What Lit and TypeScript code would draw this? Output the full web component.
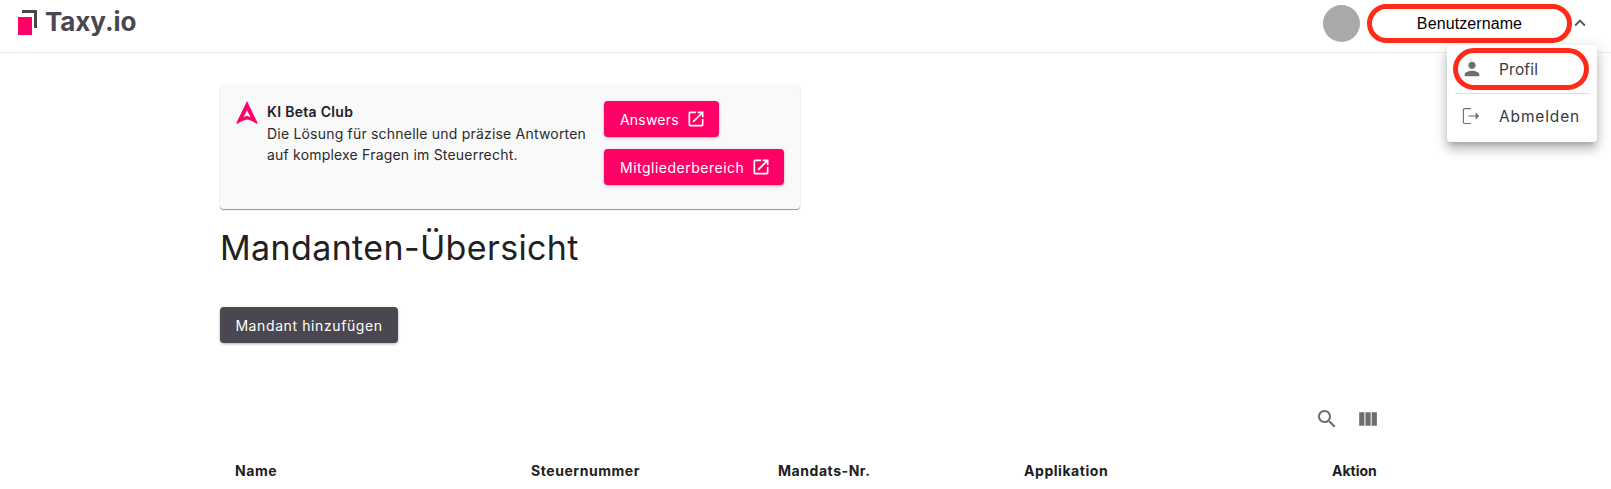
import { LitElement, html, css, svg } from "lit";
import { customElement } from "lit/decorators.js";

const icon = (d: string, size: number, cls = "") =>
  html`<svg class=${cls} width=${size} height=${size} viewBox="0 0 24 24" fill="currentColor">${svg`<path d=${d}></path>`}</svg>`;

const OPEN = "M19 19H5V5h7V3H5c-1.11 0-2 .9-2 2v14c0 1.1.89 2 2 2h14c1.1 0 2-.9 2-2v-7h-2v7zM14 3v2h3.59l-9.83 9.83 1.41 1.41L19 6.41V10h2V3h-7z";
const SEARCH = "M15.5 14h-.79l-.28-.27C15.41 12.59 16 11.11 16 9.5 16 5.91 13.09 3 9.5 3S3 5.91 3 9.5 5.91 16 9.5 16c1.61 0 3.09-.59 4.23-1.57l.27.28v.79l5 4.99L20.49 19l-4.99-5zm-6 0C7.01 14 5 11.99 5 9.5S7.01 5 9.5 5 14 7.01 14 9.5 11.99 14 9.5 14z";
const COLS = "M10 18h5V5h-5v13zm-6 0h5V5H4v13zM16 5v13h5V5h-5z";
const PERSON = "M12 12c2.21 0 4-1.79 4-4s-1.79-4-4-4-4 1.79-4 4 1.79 4 4 4zm0 2c-2.67 0-8 1.34-8 4v2h16v-2c0-2.66-5.33-4-8-4z";
const LESS = "M12 8l-6 6 1.41 1.41L12 10.83l4.59 4.58L18 14z";
const LOGOUT = "M5 4.5h7v-1.2H5C3.9 3.3 3.1 4.1 3.1 5.2v13.6c0 1.1.8 1.9 1.9 1.9h7v-1.2H5c-.4 0-.7-.3-.7-.7V5.2c0-.4.3-.7.7-.7zM21 12l-4-4v3.4H9v1.2h8V16l4-4z";

@customElement("app-root")
export class AppRoot extends LitElement {
  static styles = css`
    :host {
      display: block;
      height: 489px;
      overflow: hidden;
      position: relative;
      background: #fff;
      color: #212121;
      font-family: "Inter", "Liberation Sans", sans-serif;
    }
    .header {
      height: 52px;
      border-bottom: 1px solid #eeeeee;
      display: flex;
      align-items: center;
      padding-left: 18px;
      padding-right: 20px;
      box-sizing: content-box;
    }
    .logo { display: flex; align-items: center; gap: 7px; height: 52px; }
    .logo svg { display: block; margin-top: -6px; }
    .logo-text {
      font-size: 26px;
      font-weight: 700;
      color: #4a4750;
      line-height: 1;
      margin-top: -8px;
      letter-spacing: -0.1px;
    }
    .spacer { flex: 1; }
    .avatar { width: 37px; height: 37px; border-radius: 50%; background: #a9a9a9; margin-top: -5px; }
    .user {
      width: 205px;
      height: 39px;
      box-sizing: border-box;
      border: 5px solid #ff2a17;
      border-radius: 20px;
      margin-left: 7px;
      margin-top: -5px;
      display: flex;
      align-items: center;
      justify-content: center;
      font-family: "Liberation Sans", sans-serif;
      font-size: 16px;
      letter-spacing: 0.1px;
      color: #000;
    }
    .chev { color: #555; margin-left: -3px; margin-top: -6px; display: block; }
    .menu {
      position: absolute;
      left: 1447px;
      top: 45px;
      width: 150px;
      height: 97px;
      background: #fff;
      border-radius: 4px;
      box-shadow: 0 5px 5px -3px rgba(0,0,0,.2), 0 8px 10px 1px rgba(0,0,0,.14), 0 3px 14px 2px rgba(0,0,0,.12);
      box-sizing: border-box;
      padding: 3px 8px 0 6px;
    }
    .mi {
      display: flex;
      align-items: center;
      font-size: 15.5px;
      color: #3a3a3a;
      box-sizing: border-box;
    }
    .mi svg { color: #6f6f6f; display: block; flex: none; }
    .mi.profil {
      height: 42px;
      width: 136px;
      border: 5px solid #ff2a17;
      border-radius: 21px;
      padding-left: 3px;
      gap: 16px;
      letter-spacing: 0.2px;
    }
    .mi.profil span { margin-top: 1px; }
    .sep { height: 1px; background: #e0e0e0; margin: 3px 0 0 2px; width: 135px; }
    .mi.abmelden { height: 44px; padding-left: 7px; gap: 17px; letter-spacing: 0.85px; }
    .main { margin-left: 220px; width: 1171px; }
    .card {
      margin-top: 32px;
      width: 580px;
      height: 124px;
      box-sizing: border-box;
      background: #f9f9f9;
      border-radius: 4px;
      box-shadow: 0 1px 1px rgba(0,0,0,.42), 0 0 2px rgba(0,0,0,.06);
      padding: 16px 16px 0 16px;
      display: flex;
    }
    .a-logo { display: block; flex: none; }
    .card-text { margin-left: 9px; width: 325px; font-size: 14px; line-height: 21px; letter-spacing: 0.2px; color: #2b2b2b; flex: none; }
    .card-title { font-weight: 600; line-height: 21px; margin-bottom: 1px; letter-spacing: 0.3px; color: #212121; }
    .card-btns { display: flex; flex-direction: column; align-items: flex-start; gap: 12px; margin-left: 12px; }
    .btn {
      display: inline-flex;
      align-items: center;
      height: 36px;
      box-sizing: border-box;
      background: #ff0066;
      color: #fff;
      border-radius: 4px;
      font-size: 14px;
      font-weight: 400;
      padding: 0 13px 0 16px;
      gap: 7px;
      letter-spacing: 0.5px;
      box-shadow: 0 1px 3px rgba(0,0,0,.3);
      white-space: nowrap;
    }
    .btn.short { letter-spacing: 0.2px; }
    h1 {
      margin: 19px 0 0;
      font-size: 34px;
      font-weight: 400;
      line-height: 40px;
      letter-spacing: 0.37px;
      color: #212121;
    }
    .add {
      margin-top: 39px;
      background: #4a4750;
      width: 178px;
      justify-content: center;
      padding: 0;
      letter-spacing: 0.6px;
    }
    .tools {
      display: flex;
      justify-content: flex-end;
      align-items: center;
      gap: 16px;
      margin-top: 64px;
      height: 24px;
      padding-right: 11px;
      color: #6d6d6d;
    }
    .tools svg { display: block; }
    .thead {
      margin-top: 28px;
      display: grid;
      grid-template-columns: 296px 247px 246px 308px 1fr;
      padding-left: 15px;
      font-size: 14px;
      font-weight: 700;
      line-height: 24px;
      letter-spacing: 0.55px;
      color: #212121;
    }
    .aktion { letter-spacing: 0; }
  `;

  render() {
    return html`
      <div class="header">
        <div class="logo">
          <svg width="20" height="26" viewBox="0 0 20 26">
            <path d="M4 0H19V18H16V3H4Z" fill="#4a4750"></path>
            <rect x="0" y="7" width="14" height="18" fill="#ff0066"></rect>
          </svg>
          <span class="logo-text">Taxy.io</span>
        </div>
        <div class="spacer"></div>
        <div class="avatar"></div>
        <div class="user">Benutzername</div>
        ${icon(LESS, 22, "chev")}
      </div>
      <div class="menu">
        <div class="mi profil">${icon(PERSON, 22)}<span>Profil</span></div>
        <div class="sep"></div>
        <div class="mi abmelden">${icon(LOGOUT, 22)}<span>Abmelden</span></div>
      </div>
      <div class="main">
        <div class="card">
          <svg class="a-logo" width="22" height="23" viewBox="0 0 24 26">
            <path fill-rule="evenodd" fill="#ff0066" d="M12 0L24 25L23 26C20 24 16 21.5 12 21C8 21.5 4 24 1 26L0 25ZM12 10.5L8 18.5L12 16.8L16 18.5Z"></path>
          </svg>
          <div class="card-text">
            <div class="card-title">KI Beta Club</div>
            Die Lösung für schnelle und präzise Antworten auf komplexe Fragen im Steuerrecht.
          </div>
          <div class="card-btns">
            <div class="btn short">Answers ${icon(OPEN, 20)}</div>
            <div class="btn">Mitgliederbereich ${icon(OPEN, 20)}</div>
          </div>
        </div>
        <h1>Mandanten-Übersicht</h1>
        <div class="btn add">Mandant hinzufügen</div>
        <div class="tools">${icon(SEARCH, 24)}${icon(COLS, 25)}</div>
        <div class="thead">
          <div>Name</div><div>Steuernummer</div><div>Mandats-Nr.</div><div>Applikation</div><div class="aktion">Aktion</div>
        </div>
      </div>
    `;
  }
}
